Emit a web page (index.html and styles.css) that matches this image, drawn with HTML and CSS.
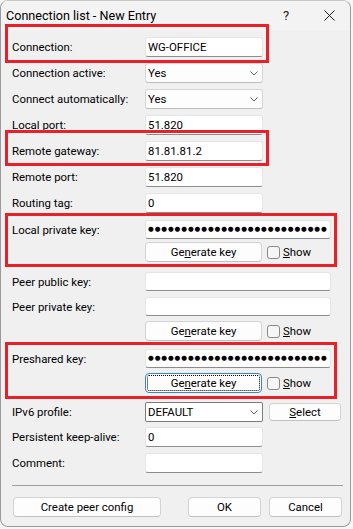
FILE: index.html
```html
<!DOCTYPE html>
<html lang="en">
<head>
<meta charset="utf-8">
<title>Connection list - New Entry</title>
<link rel="stylesheet" href="styles.css">
</head>
<body>
<div class="window">
  <div class="titlebar">
    <span class="title">Connection list - New Entry</span>
    <span class="help">?</span>
    <span class="close"><svg width="11" height="11" viewBox="0 0 11 11"><path d="M0.5 0.5 L10.5 10.5 M10.5 0.5 L0.5 10.5" stroke="#1a1a1a" stroke-width="1" fill="none"/></svg></span>
  </div>
  <div class="content">
    <div class="group group--short g1">
      <div class="row"><span class="lbl">Connection:</span><span class="field">WG-OFFICE</span></div>
    </div>
    <div class="row"><span class="lbl">Connection active:</span><span class="combo"><span>Yes</span><svg class="chev" width="8" height="5" viewBox="0 0 8 5"><path d="M0.5 0.5 L4 4 L7.5 0.5" stroke="#606060" fill="none"/></svg></span></div>
    <div class="row"><span class="lbl">Connect automatically:</span><span class="combo"><span>Yes</span><svg class="chev" width="8" height="5" viewBox="0 0 8 5"><path d="M0.5 0.5 L4 4 L7.5 0.5" stroke="#606060" fill="none"/></svg></span></div>
    <div class="row"><span class="lbl">Local port:</span><span class="field">51.820</span></div>
    <div class="group group--short g2">
      <div class="row"><span class="lbl">Remote gateway:</span><span class="field">81.81.81.2</span></div>
    </div>
    <div class="row"><span class="lbl">Remote port:</span><span class="field">51.820</span></div>
    <div class="row"><span class="lbl">Routing tag:</span><span class="field">0</span></div>
    <div class="group group--long g3">
      <div class="row row--key"><span class="lbl">Local private key:</span><span class="field field--long"><span class="dots">●●●●●●●●●●●●●●●●●●●●●●●●●●●</span></span></div>
      <div class="row row--gen"><span></span><span class="genline"><span class="btn btn--gen">Ge<u>n</u>erate key</span><span class="check"></span><span class="show"><u>S</u>how</span></span></div>
    </div>
    <div class="row row--key row--after"><span class="lbl">Peer public key:</span><span class="field field--long"></span></div>
    <div class="row row--key"><span class="lbl">Peer private key:</span><span class="field field--long"></span></div>
    <div class="row row--gen2"><span></span><span class="genline"><span class="btn btn--gen">Ge<u>n</u>erate key</span><span class="check"></span><span class="show"><u>S</u>how</span></span></div>
    <div class="group group--long g4">
      <div class="row row--key"><span class="lbl">Preshared key:</span><span class="field field--long"><span class="dots">●●●●●●●●●●●●●●●●●●●●●●●●●●●</span></span></div>
      <div class="row row--gen2"><span></span><span class="genline"><span class="btn btn--gen btn--focus">Ge<u>n</u>erate key</span><span class="check"></span><span class="show"><u>S</u>how</span></span></div>
    </div>
    <div class="row row--ipv6"><span class="lbl">IPv6 profile:</span><span class="ipline"><span class="combo combo--active"><span>DEFAULT</span><svg class="chev" width="8" height="5" viewBox="0 0 8 5"><path d="M0.5 0.5 L4 4 L7.5 0.5" stroke="#606060" fill="none"/></svg></span><span class="btn btn--select"><u>S</u>elect</span></span></div>
    <div class="row row--ka"><span class="lbl">Persistent keep-alive:</span><span class="field">0</span></div>
    <div class="row"><span class="lbl">Comment:</span><span class="field"></span></div>
  </div>
  <div class="sep"></div>
  <div class="footer">
    <span class="btn btn--peer">Create peer config</span>
    <span class="footer-right">
      <span class="btn btn--dlg">OK</span>
      <span class="btn btn--dlg">Cancel</span>
    </span>
  </div>
</div>
</body>
</html>
```
FILE: styles.css
```css
html, body {
  margin: 0;
  padding: 0;
  background: #f7f7f7;
}
body {
  font-family: Roboto, "Liberation Sans", sans-serif;
  font-size: 11.4px;
  color: #000;
}
.window {
  box-sizing: border-box;
  width: 351px;
  height: 527px;
  background: #f0f0f0;
  border: 1px solid #9a9a9a;
  border-top-color: #c8c8c8;
  border-radius: 8px;
  overflow: hidden;
  display: flex;
  flex-direction: column;
}
.titlebar {
  height: 29px;
  flex: none;
  display: flex;
  align-items: center;
  background: #f3f3f3;
  padding-left: 5px;
}
.title {
  flex: 1;
  font-size: 12.6px;
  color: #000;
}
.help {
  width: 46px;
  text-align: center;
  font-size: 13px;
  color: #1a1a1a;
}
.close {
  width: 41px;
  display: flex;
  justify-content: center;
  align-items: center;
}
.content {
  display: flex;
  flex-direction: column;
  padding-left: 11px;
  padding-top: 1px;
}
.group {
  position: relative;
  box-sizing: border-box;
}
.group::after {
  content: "";
  position: absolute;
  border: 3px solid #e8202a;
  pointer-events: none;
}
.group--short { width: 251px; }
.group--long { width: 319px; }
.g1::after { top: -7px; bottom: -6px; left: -7px; right: -6px; }
.g2::after { top: -5px; bottom: -5px; left: -7px; right: -6px; }
.g3::after { top: -7px; bottom: -5px; left: -7px; right: -6px; }
.g4::after { top: -7px; bottom: -6px; left: -7px; right: -6px; }
.g1 .row { margin-top: 6px; }
.row {
  display: grid;
  grid-template-columns: 133px auto;
  align-items: center;
  height: 20px;
  margin-top: 6px;
}
.g3 { margin-top: 7px; }
.g3 .row--key, .g4 .row--key { margin-top: 0; }
.row--key { height: 19px; }
.row--gen { margin-top: 3px; }
.row--after { margin-top: 10px; }
.row--gen2 { margin-top: 5px; }
.g4 { margin-top: 8px; }
.row--ipv6 { margin-top: 9px; }
.row--ka { margin-top: 5px; }
.lbl {
  white-space: nowrap;
}
.field {
  box-sizing: border-box;
  width: 118px;
  height: 20px;
  background: #fff;
  border: 1px solid #e5e5e5;
  border-bottom-color: #8c8c8c;
  border-radius: 3px;
  padding: 0 2px;
  display: flex;
  align-items: center;
  white-space: nowrap;
  overflow: hidden;
}
.field--long {
  width: 186px;
  height: 19px;
}
.dots {
  font-family: "DejaVu Sans", sans-serif;
  font-size: 6.6px;
  letter-spacing: 0.9px;
  line-height: 1;
}
.combo {
  box-sizing: border-box;
  width: 118px;
  height: 20px;
  background: #fdfdfd;
  border: 1px solid #d5d5d5;
  border-bottom-color: #bcbcbc;
  border-radius: 3px;
  padding: 0 4px 0 2px;
  display: flex;
  align-items: center;
  justify-content: space-between;
}
.combo--active {
  background: #fff;
  border-color: #7a7a7a;
  border-radius: 2px;
}
.btn {
  box-sizing: border-box;
  height: 20px;
  background: #fdfdfd;
  border: 1px solid #d3d3d3;
  border-bottom-color: #c0c0c0;
  border-radius: 4px;
  display: flex;
  align-items: center;
  justify-content: center;
  white-space: nowrap;
}
.btn--gen { width: 117px; }
.btn--focus {
  border-color: #3b82c8;
  outline: 1px dotted #000;
  outline-offset: -3px;
}
.genline, .ipline {
  display: flex;
  align-items: center;
}
.check {
  box-sizing: border-box;
  width: 13px;
  height: 13px;
  border: 1px solid #8a8a8a;
  border-radius: 3px;
  background: #f6f6f6;
  margin-left: 5px;
}
.show { margin-left: 3px; }
.btn--select {
  width: 72px;
  height: 18px;
  margin-left: 6px;
}
.sep {
  height: 1px;
  background: #a0a0a0;
  margin: 12px 7px 0 11px;
  flex: none;
}
.footer {
  display: flex;
  justify-content: space-between;
  padding: 11px 8px 0 12px;
}
.footer-right {
  display: flex;
  gap: 8px;
}
.btn--peer { width: 148px; }
.btn--dlg { width: 73px; }
```
